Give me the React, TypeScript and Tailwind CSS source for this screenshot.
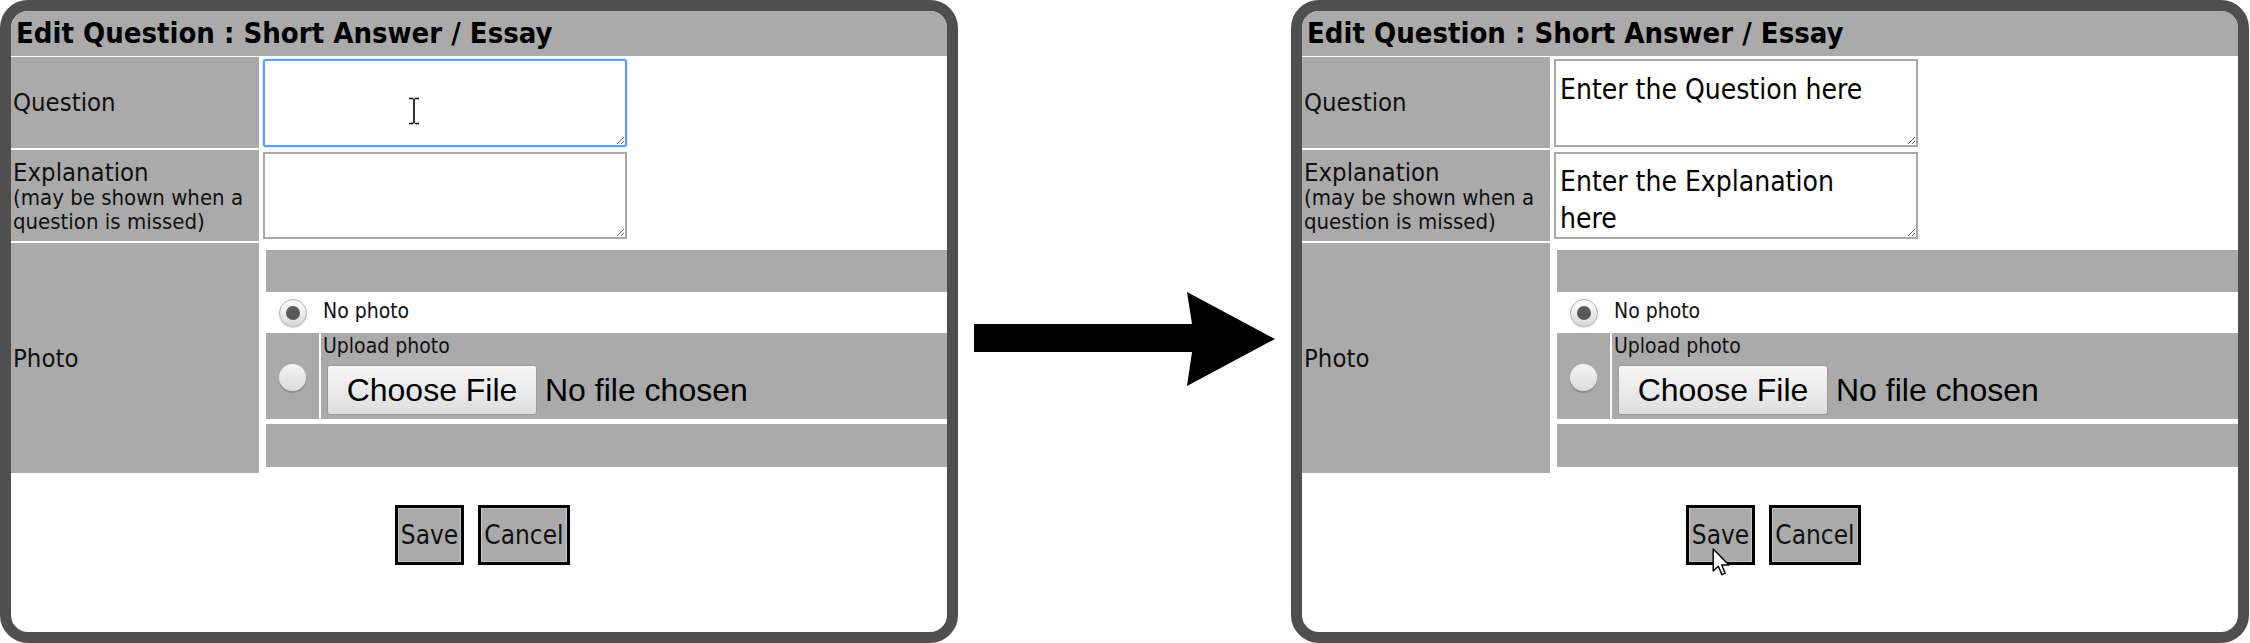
import React from "react";

const FONT = { fontFamily: '"DejaVu Sans Condensed", "DejaVu Sans", sans-serif' };
const ARIAL = { fontFamily: '"Liberation Sans", Arial, sans-serif' };

function RadioChecked() {
  return (
    <div className="w-[28px] h-[28px] rounded-full border border-[#b0b0b0] bg-gradient-to-b from-white to-[#d8d8d8] shadow-[0_1px_1px_rgba(0,0,0,0.15)] flex items-center justify-center">
      <div className="w-[14px] h-[14px] rounded-full bg-[#5a5a5a]" />
    </div>
  );
}

function RadioEmpty() {
  return (
    <div className="w-[27px] h-[27px] rounded-full bg-gradient-to-b from-[#f4f4f4] to-[#dcdcdc] shadow-[0_2px_1px_rgba(0,0,0,0.18)]" />
  );
}

function IBeam() {
  return (
    <svg width="12" height="28" viewBox="0 0 12 28" className="absolute left-[145px] top-[38px]">
      <path d="M1 1.5h4M7 1.5h4M6 1.5v25M1 26.5h4M7 26.5h4" stroke="#fff" strokeWidth="3.5" fill="none" />
      <path d="M1 1.5h4M7 1.5h4M6 1.5v25M1 26.5h4M7 26.5h4" stroke="#000" strokeWidth="1.6" fill="none" />
    </svg>
  );
}

function Pointer() {
  return (
    <svg width="19" height="29" viewBox="0 0 14 22" className="absolute left-[23px] top-[40px]">
      <path d="M0.7 0.7 L0.7 17.5 L4.6 13.8 L7.3 20.2 L9.8 19.1 L7.2 12.9 L12.6 12.9 Z" fill="#fff" stroke="#000" strokeWidth="1.1" strokeLinejoin="round" />
    </svg>
  );
}

function Panel({ filled }: { filled: boolean }) {
  return (
    <div
      className="relative shrink-0 w-[958px] h-[643px] rounded-[28px] border-[11px] border-[#4f4f4f] bg-white overflow-hidden text-[#111]"
      style={FONT}
    >
      <div className="h-[45px] bg-[#aaaaaa] pl-[5px] flex items-center text-[29px] font-bold text-black leading-none">
        Edit Question : Short Answer / Essay
      </div>
      <div className="mt-[1px] flex flex-col gap-[2px]">
        {/* Question row */}
        <div className="flex gap-[4px] h-[91px]">
          <div className="w-[248px] bg-[#aaaaaa] flex items-center pl-[2px] text-[25.5px]">Question</div>
          <div className="flex-1 pt-[2px]">
            <div className="relative w-[364px] h-[88px]">
              <textarea
                readOnly
                defaultValue={filled ? "Enter the Question here" : ""}
                className={
                  filled
                    ? "block w-full h-full border-2 border-[#a9a9a9] bg-white px-[4px] pt-[12px] text-[28px] leading-[33px] text-black outline-none"
                    : "block w-full h-full border-2 border-[#5c9cf7] rounded-[3px] bg-white outline-none shadow-[0_0_2px_#8bb8fa]"
                }
                style={FONT}
              />
              {!filled && <IBeam />}
            </div>
          </div>
        </div>
        {/* Explanation row */}
        <div className="flex gap-[4px] h-[91px]">
          <div className="w-[248px] bg-[#aaaaaa] flex flex-col justify-center pl-[2px]">
            <div className="text-[25.5px] leading-[28px]">Explanation</div>
            <div className="text-[22px] leading-[24px]">(may be shown when a</div>
            <div className="text-[22px] leading-[24px]">question is missed)</div>
          </div>
          <div className="flex-1 pt-[2px]">
            <textarea
              readOnly
              defaultValue={filled ? "Enter the Explanation here" : ""}
              className="block w-[364px] h-[87px] border-2 border-[#a9a9a9] bg-white pl-[4px] pr-[30px] pt-[9px] text-[28px] leading-[37px] text-black outline-none overflow-hidden"
              style={FONT}
            />
          </div>
        </div>
        {/* Photo row */}
        <div className="flex gap-[4px] h-[230px]">
          <div className="w-[248px] bg-[#aaaaaa] flex items-center pl-[2px] text-[25.5px]">Photo</div>
          <div className="flex-1 flex flex-col pt-[7px] pl-[3px]">
            <div className="h-[42px] bg-[#aaaaaa]" />
            <div className="h-[41px] flex">
              <div className="w-[53px] flex items-center justify-center">
                <RadioChecked />
              </div>
              <div className="ml-[4px] flex items-center text-[21px] pb-[2px]">No photo</div>
            </div>
            <div className="h-[86px] flex gap-[2px]">
              <div className="w-[53px] bg-[#aaaaaa] flex items-center justify-center pt-[2px]">
                <RadioEmpty />
              </div>
              <div className="flex-1 bg-[#aaaaaa] pl-[2px] pt-[1px]">
                <div className="text-[21px] leading-[24px]">Upload photo</div>
                <div className="mt-[7px] ml-[4px] flex items-center" style={ARIAL}>
                  <div className="w-[210px] h-[50px] rounded-[3px] border border-[#9a9a9a] bg-gradient-to-b from-[#f7f7f7] to-[#dedede] flex items-center justify-center text-[32px] text-black">
                    Choose File
                  </div>
                  <div className="ml-[8px] text-[32px] text-black">No file chosen</div>
                </div>
              </div>
            </div>
            <div className="h-[5px]" />
            <div className="h-[43px] bg-[#aaaaaa]" />
          </div>
        </div>
      </div>
      {/* Buttons */}
      <div className="mt-[32px] flex justify-center gap-[14px] pl-[7px]">
        <div className="relative w-[69px] h-[60px] border-[3px] border-black bg-[#aaaaaa] shadow-[inset_0_0_0_1px_#c4c4c4] flex items-center justify-center text-[26px] text-[#111]">
          Save
          {filled && <Pointer />}
        </div>
        <div className="w-[92px] h-[60px] border-[3px] border-black bg-[#aaaaaa] shadow-[inset_0_0_0_1px_#c4c4c4] flex items-center justify-center text-[26px] text-[#111]">
          Cancel
        </div>
      </div>
    </div>
  );
}

export default function App() {
  return (
    <div className="flex w-[2250px] h-[643px] bg-white overflow-hidden">
      <Panel filled={false} />
      <div className="w-[333px] shrink-0 pt-[292px] pl-[16px]">
        <svg width="302" height="95" viewBox="0 0 302 95">
          <polygon points="0,32 218,32 213,0 301,47 213,94 218,60 0,60" fill="#000" />
        </svg>
      </div>
      <Panel filled={true} />
    </div>
  );
}
